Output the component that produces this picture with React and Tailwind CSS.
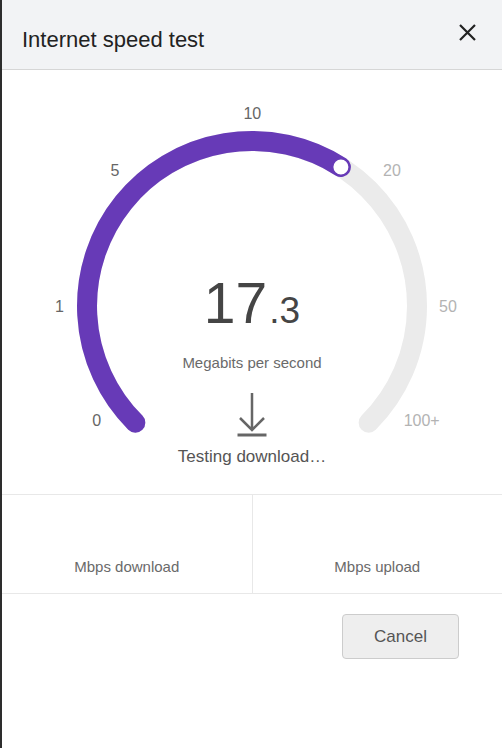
import React from "react";

const font = { fontFamily: '"Liberation Sans", Arial, sans-serif' };

function Gauge() {
  const labels = [
    { t: "0", x: 94.7, y: 350, c: "#666666" },
    { t: "1", x: 57.5, y: 236.7, c: "#666666" },
    { t: "5", x: 113, y: 100, c: "#666666" },
    { t: "10", x: 250.3, y: 43, c: "#666666" },
    { t: "20", x: 390, y: 100, c: "#b3b3b3" },
    { t: "50", x: 446, y: 236.7, c: "#b3b3b3" },
    { t: "100+", x: 419.7, y: 350, c: "#b3b3b3" },
  ];
  return (
    <svg className="absolute inset-0" width="500" height="424" viewBox="0 0 500 424">
      <path
        d="M 133.33 352.67 A 165 165 0 1 1 366.67 352.67"
        fill="none"
        stroke="#ebebeb"
        strokeWidth="20"
        strokeLinecap="round"
      />
      <path
        d="M 133.33 352.67 A 165 165 0 0 1 338.9 97.0"
        fill="none"
        stroke="#673ab7"
        strokeWidth="20"
        strokeLinecap="round"
      />
      <circle cx="338.9" cy="97.0" r="8.3" fill="#ffffff" stroke="#673ab7" strokeWidth="1.6" />
      {labels.map((l) => (
        <text
          key={l.t}
          x={l.x}
          y={l.y}
          textAnchor="middle"
          dominantBaseline="central"
          fontSize="16"
          fill={l.c}
          style={font}
        >
          {l.t}
        </text>
      ))}
    </svg>
  );
}

export default function App() {
  return (
    <div className="flex w-[502px] h-[748px] bg-white" style={font}>
      <div className="w-[2px] h-full bg-[#2d2d2d]" />
      <div className="flex flex-col w-[500px] h-full bg-white">
        <div className="flex items-start justify-between h-[70px] bg-[#f2f3f5] border-b border-[#d6d6d6] pl-[20px] pr-[25px]">
          <div className="pt-[29px] text-[22px] leading-none text-[#222222]">Internet speed test</div>
          <svg className="mt-[23px]" width="19" height="19" viewBox="0 0 19 19">
            <path d="M2 2 L17 17 M17 2 L2 17" stroke="#222222" strokeWidth="2.2" fill="none" />
          </svg>
        </div>

        <div className="relative h-[424px] flex flex-col items-center">
          <Gauge />
          <div className="relative flex items-baseline pt-[205px] text-[#454545]">
            <span className="text-[57px] leading-none">17</span>
            <span className="ml-[2px] text-[37px] leading-none">.3</span>
          </div>
          <div className="relative mt-[23px] text-[15px] leading-none text-[#6a6a6a]">Megabits per second</div>
          <svg className="relative mt-[23px]" width="30" height="44" viewBox="0 0 30 44">
            <path d="M15 0 L15 37 M3 25 L15 37 L27 25" stroke="#666666" strokeWidth="2.5" fill="none" />
            <path d="M0.5 42 L29.5 42" stroke="#666666" strokeWidth="3" fill="none" />
          </svg>
          <div className="relative mt-[11px] text-[17px] leading-none text-[#555555]">Testing download…</div>
        </div>

        <div className="flex h-[100px] border-t border-b border-[#e8e8e8]">
          <div className="flex-1 flex items-end justify-center pb-[19px] border-r border-[#e8e8e8] text-[15px] leading-none text-[#6a6a6a]">
            Mbps download
          </div>
          <div className="flex-1 flex items-end justify-center pb-[19px] text-[15px] leading-none text-[#6a6a6a]">
            Mbps upload
          </div>
        </div>

        <div className="flex justify-end pt-[20px] pr-[43px]">
          <button className="w-[117px] h-[45px] rounded-[4px] bg-[#eeeeee] border border-[#cccccc] text-[17px] text-[#555555] leading-none">
            Cancel
          </button>
        </div>
      </div>
    </div>
  );
}
